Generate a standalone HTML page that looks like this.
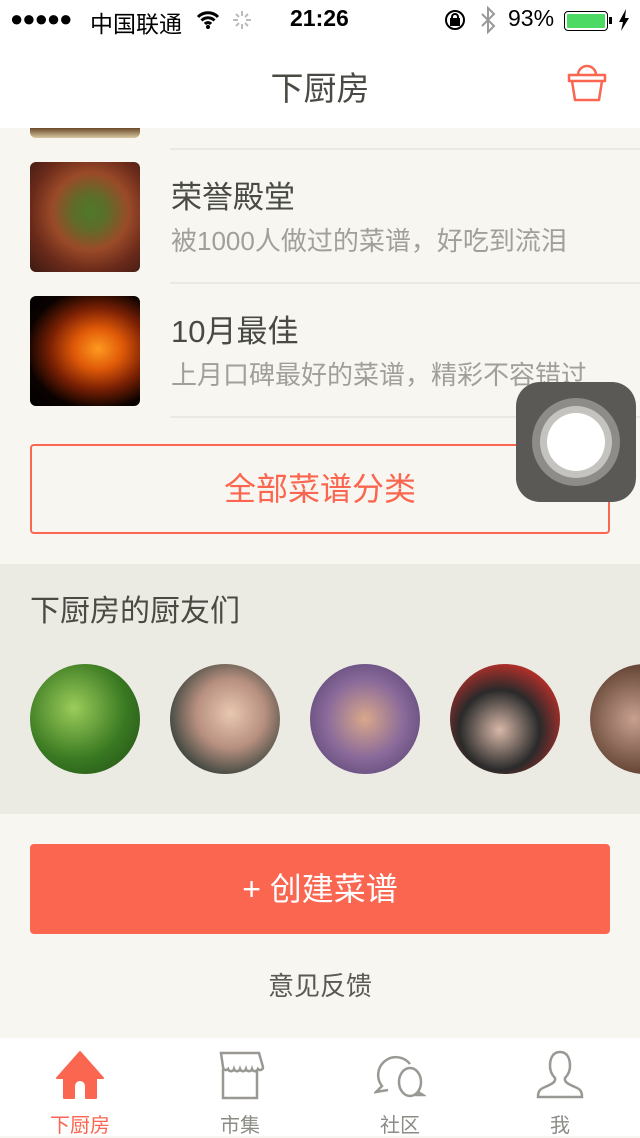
<!DOCTYPE html>
<html><head><meta charset="utf-8"><style>
*{margin:0;padding:0;box-sizing:border-box}
body{width:640px;height:1136px;overflow:hidden;background:#f7f6f0;font-family:"Liberation Sans","Noto Sans CJK SC",sans-serif;position:relative}
.abs{position:absolute}
.status{top:0;left:0;width:640px;height:40px;background:#fff;font-size:24px;color:#000}
.nav{top:40px;left:0;width:640px;height:88px;background:#fff}
.sep{height:2px;background:#e9e8e1;left:170px;right:0}
.img{left:30px;width:110px;height:110px;border-radius:6px}
.t{left:171px;font-size:31px;color:#4a4a44}
.s{left:171px;font-size:26px;color:#a09f99;white-space:nowrap}
.av{top:664px;width:110px;height:110px;border-radius:50%}
.tab{top:1038px;left:0;width:640px;height:98px;background:#fff}
.tl{font-size:20px;color:#8c8b86;width:160px;text-align:center}
</style></head><body>
<div class="abs status">
 <div class="abs" style="left:10px;top:6px;font-size:22px;letter-spacing:-1px">●●●●●</div>
 <div class="abs" style="left:90px;top:5px;font-size:23px">中国联通</div>
 <svg class="abs" style="left:196px;top:10px" width="24" height="20" viewBox="0 0 24 20"><path d="M2 7a14 14 0 0 1 20 0M5.5 10.5a9 9 0 0 1 13 0M9 14a4 4 0 0 1 6 0" stroke="#000" stroke-width="3" fill="none"/><circle cx="12" cy="17" r="2"/></svg>
 <svg class="abs" style="left:232px;top:10px" width="20" height="20" viewBox="0 0 20 20" stroke="#bbb" stroke-width="2"><path d="M10 1v5M10 14v5M1 10h5M14 10h5M4 4l3 3M13 13l3 3M4 16l3-3M13 7l3-3"/></svg>
 <div class="abs" style="left:290px;top:5px;font-size:23px;font-weight:bold">21:26</div>
 <svg class="abs" style="left:444px;top:9px" width="24" height="22" viewBox="0 0 24 22" fill="none" stroke="#000" stroke-width="2"><circle cx="11" cy="11" r="9"/><rect x="7" y="10" width="8" height="6" fill="#000"/><path d="M8 10V8a3 3 0 0 1 6 0v2"/></svg>
 <svg class="abs" style="left:479px;top:6px" width="18" height="28" viewBox="0 0 18 28" fill="none" stroke="#999" stroke-width="2"><path d="M3 8l12 12-6 6V2l6 6L3 20"/></svg>
 <div class="abs" style="left:508px;top:5px;font-size:23px">93%</div>
 <div class="abs" style="left:564px;top:11px;width:44px;height:20px;border:1.5px solid #000;border-radius:4px;padding:2px"><div style="background:#4cd964;width:100%;height:100%;border-radius:1px"></div></div>
 <div class="abs" style="left:609px;top:17px;width:3px;height:7px;background:#000"></div>
 <svg class="abs" style="left:618px;top:9px" width="12" height="22" viewBox="0 0 12 22"><path d="M8 0L1 13h4l-2 9 8-13H7z" fill="#000"/></svg>
</div>
<div class="abs nav">
 <div class="abs" style="left:0;width:640px;text-align:center;top:22px;font-size:33px;color:#4a4a44">下厨房</div>
 <svg class="abs" style="left:566px;top:23px" width="42" height="40" viewBox="0 0 42 40"><path d="M12 12a9 9 0 0 1 18 0M3 12h36v6H3zM6 18l3 19h24l3-19" stroke="#fa6650" stroke-width="2.5" fill="none" stroke-linejoin="round"/></svg>
</div>
<div class="abs" style="left:30px;top:128px;width:110px;height:10px;background:linear-gradient(#6b4a2a,#d8c8a0);border-radius:0 0 6px 6px"></div>
<div class="abs sep" style="top:148px"></div>
<div class="abs img" style="top:162px;background:radial-gradient(circle at 55% 45%,#4e7a2a 0,#5e6c2a 20%,#9a4a28 45%,#6a2a1a 70%,#3a1a12 100%)"></div>
<div class="abs t" style="top:172px">荣誉殿堂</div>
<div class="abs s" style="top:221px">被1000人做过的菜谱，好吃到流泪</div>
<div class="abs sep" style="top:282px"></div>
<div class="abs img" style="top:296px;background:radial-gradient(ellipse at 62% 48%,#ff9a20 0,#e05a08 25%,#7a2004 50%,#0a0200 75%,#000 100%)"></div>
<div class="abs t" style="top:306px">10月最佳</div>
<div class="abs s" style="top:355px">上月口碑最好的菜谱，精彩不容错过</div>
<div class="abs sep" style="top:416px"></div>
<div class="abs" style="left:30px;top:444px;width:580px;height:90px;border:2px solid #fa6650;border-radius:4px;text-align:center;line-height:86px;font-size:32px;color:#fa6650">全部菜谱分类</div>
<div class="abs" style="left:0;top:564px;width:640px;height:250px;background:#ebeae3"></div>
<div class="abs" style="left:30px;top:586px;font-size:30px;color:#4a4a44">下厨房的厨友们</div>
<div class="abs av" style="left:30px;background:radial-gradient(circle at 40% 40%,#9ccc5a,#3a7a22 55%,#1e4a14)"></div>
<div class="abs av" style="left:170px;background:radial-gradient(circle at 55% 45%,#e8c8b0,#b89080 40%,#2a3a34 80%)"></div>
<div class="abs av" style="left:310px;background:radial-gradient(circle at 50% 50%,#d8a88a,#8a6a9a 50%,#4a3a6a)"></div>
<div class="abs av" style="left:450px;background:radial-gradient(circle at 45% 60%,#d8b8a8,#2a2a2a 45%,#c8302a 80%)"></div>
<div class="abs av" style="left:590px;background:radial-gradient(circle at 40% 50%,#c8a090,#6a4a3a 60%)"></div>
<div class="abs" style="left:30px;top:844px;width:580px;height:90px;background:#fa6650;border-radius:4px;text-align:center;line-height:90px;font-size:32px;color:#fff">+ 创建菜谱</div>
<div class="abs" style="left:0;width:640px;top:966px;text-align:center;font-size:26px;color:#5a5954">意见反馈</div>
<div class="abs" style="left:516px;top:382px;width:120px;height:120px;border-radius:24px;background:#5a5955"></div>
<div class="abs" style="left:532px;top:398px;width:88px;height:88px;border-radius:50%;background:#8d8c88"></div>
<div class="abs" style="left:540px;top:406px;width:72px;height:72px;border-radius:50%;background:#c4c3bf"></div>
<div class="abs" style="left:547px;top:413px;width:58px;height:58px;border-radius:50%;background:#fff"></div>
<div class="abs tab">
 <svg class="abs" style="left:55px;top:12px" width="50" height="50" viewBox="0 0 50 50"><path d="M25 2L2 28h7v20h10V36a6 6 0 0 1 12 0v12h10V28h7z" fill="#fa6650" stroke="#fa6650" stroke-linejoin="round" stroke-width="2"/></svg>
 <svg class="abs" style="left:215px;top:12px" width="50" height="50" viewBox="0 0 50 50" fill="none" stroke="#9a9893" stroke-width="2.5"><path d="M6 3h38l4 14c0 3-3 4-5 2c-1 3-5 3-6 0c-1 3-5 3-6 0c-1 3-5 3-6 0c-1 3-5 3-6 0c-1 3-5 3-6 0c-2 2-5 1-5-2z"/><path d="M8 19v29h34V19"/></svg>
 <svg class="abs" style="left:374px;top:12px" width="52" height="50" viewBox="0 0 52 50" fill="none" stroke="#9a9893" stroke-width="2.5"><path d="M36 14a16 16 0 1 0-28 22l-6 6l12-2"/><ellipse cx="36" cy="32" rx="11" ry="14"/><path d="M44 42l5 3h-8"/></svg>
 <svg class="abs" style="left:535px;top:12px" width="50" height="50" viewBox="0 0 50 50" fill="none" stroke="#9a9893" stroke-width="2.5"><path d="M25 2c-7 0-10 6-10 14c0 6 3 10 5 12c1 4-3 6-10 9c-5 2-7 4-7 10h44c0-6-2-8-7-10c-7-3-11-5-10-9c2-2 5-6 5-12c0-8-3-14-10-14z"/></svg>
 <div class="abs tl" style="left:0;top:71px;color:#fa6650">下厨房</div>
 <div class="abs tl" style="left:160px;top:71px">市集</div>
 <div class="abs tl" style="left:320px;top:71px">社区</div>
 <div class="abs tl" style="left:480px;top:71px">我</div>
</div>
</body></html>
